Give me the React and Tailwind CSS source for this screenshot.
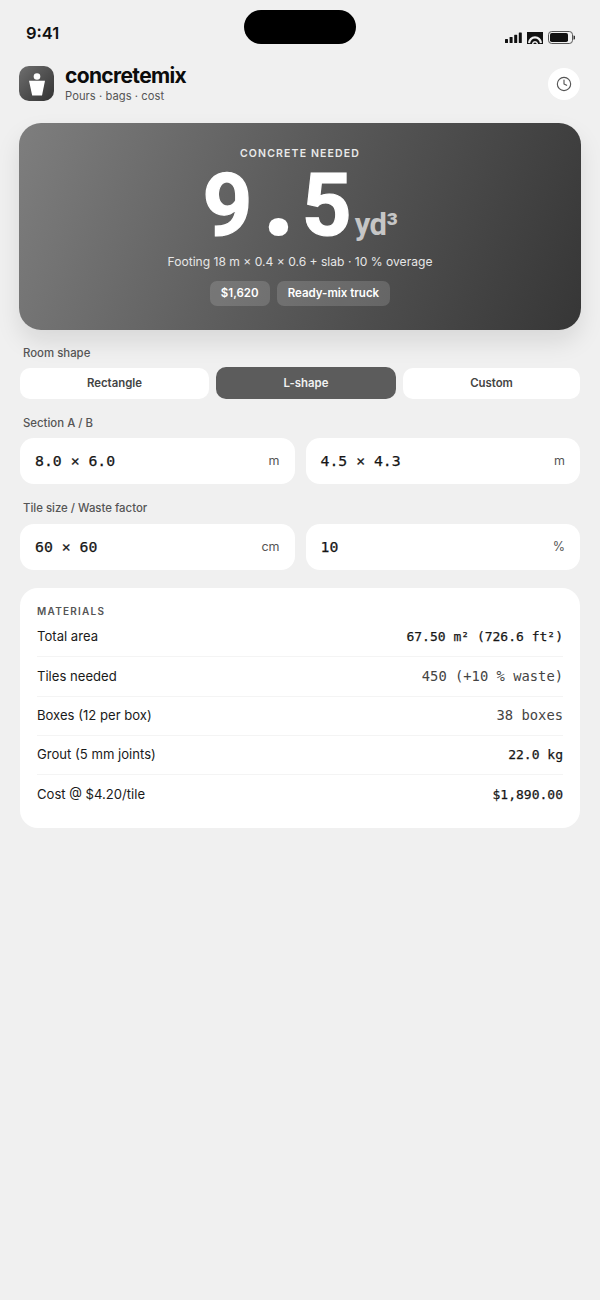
import React from "react";
import { Clock } from "lucide-react";

const inter = "font-['Inter',sans-serif]";
const mono = "font-['DejaVu_Sans_Mono',monospace]";

function Field({ value, unit }) {
  return (
    <div className="flex h-[46px] flex-1 items-center justify-between rounded-[14px] bg-white pl-[15px] pr-[15px]">
      <span className={`${mono} text-[14.8px] text-[#161616] [-webkit-text-stroke:0.25px_#161616]`}>{value}</span>
      <span className="text-[12.5px] text-[#555]">{unit}</span>
    </div>
  );
}

function Row({ label, value, last, bold }) {
  return (
    <div className={`flex h-[39.25px] items-center justify-between ${last ? "" : "border-b border-[#f4f4f4]"}`}>
      <span className="text-[13.1px] text-[#1a1a1a]">{label}</span>
      <span className={bold
        ? `${mono} text-[13px] text-[#161616] [-webkit-text-stroke:0.25px_#161616]`
        : `${mono} text-[13.8px] text-[#444]`}>{value}</span>
    </div>
  );
}

export default function App() {
  return (
    <div className={`${inter} h-[1300px] w-[600px] overflow-hidden bg-[#f0f0f0]`}>
      <div className="relative flex h-[54px] items-start justify-between pl-[26px] pr-[25px]">
        <span className="mt-[23px] text-[16.5px] font-semibold leading-[20px] text-[#111]">9:41</span>
        <div className="absolute left-[244px] top-[10px] h-[34px] w-[112px] rounded-full bg-black" />
        <div className="mt-[31px] flex items-center gap-[5px]">
          <svg width="17" height="11" viewBox="0 0 17 11" fill="#111">
            <rect x="0" y="7" width="3" height="4" rx="0.6" />
            <rect x="4.6" y="5" width="3" height="6" rx="0.6" />
            <rect x="9.2" y="2.8" width="3" height="8.2" rx="0.6" />
            <rect x="13.8" y="0.5" width="3" height="10.5" rx="0.6" />
          </svg>
          <svg width="16" height="12" viewBox="0 0 16 12">
            <rect width="16" height="12" fill="#111" />
            <path d="M2 11 C3.5 3.5 12.5 3.5 14 11" fill="none" stroke="#f0f0f0" strokeWidth="2.2" />
            <path d="M5.5 12 C6.2 9 9.8 9 10.5 12" fill="none" stroke="#f0f0f0" strokeWidth="1.4" />
          </svg>
          <svg width="27" height="13" viewBox="0 0 27 13">
            <rect x="0.5" y="0.5" width="24" height="12" rx="3.2" fill="none" stroke="#555" />
            <rect x="2" y="2" width="18" height="9" rx="1.8" fill="#111" />
            <path d="M25.5 4.5 a2 2 0 0 1 0 4 z" fill="#333" />
          </svg>
        </div>
      </div>

      <div className="mt-[12px] flex h-[35px] items-center justify-between pl-[19px] pr-[20px]">
        <div className="flex items-center gap-[11px]">
          <div className="flex h-[35px] w-[35px] items-center justify-center rounded-[10px] bg-gradient-to-br from-[#6f6f6f] to-[#333]">
            <svg width="18" height="24" viewBox="0 0 18 24" fill="#fff">
              <circle cx="9" cy="4.5" r="3.3" />
              <path d="M1 8.8 H17 L14 23.5 H4.2 Z" />
            </svg>
          </div>
          <div>
            <div className="text-[21px] font-bold leading-[24px] tracking-[-0.65px] text-[#0c0c0c]">concretemix</div>
            <div className="mt-[1px] text-[11.2px] leading-[15px] tracking-[0.05px] text-[#555]">Pours · bags · cost</div>
          </div>
        </div>
        <div className="flex h-[32px] w-[32px] items-center justify-center rounded-full bg-white">
          <Clock size={16} strokeWidth={1.7} color="#555" />
        </div>
      </div>

      <div className="mx-[19px] mt-[22px] flex h-[207px] flex-col items-center rounded-[22px] bg-[linear-gradient(112deg,#7e7e7e_0%,#5c5c5c_45%,#363636_100%)] pt-[24px] shadow-[0_12px_24px_rgba(0,0,0,0.1)]">
        <div className="text-[10.5px] font-semibold leading-[13px] tracking-[1.15px] text-[#e9e9e9]">CONCRETE NEEDED</div>
        <div className="mt-[3px] flex h-[79px] items-baseline text-white">
          <span className="font-['Roboto',sans-serif] text-[87px] font-bold leading-[85px] [-webkit-text-stroke:1.2px_#fff]">
            <span>9</span>
            <span className="ml-[9px] text-[122px] leading-[0] [-webkit-text-stroke:0]">.</span>
            <span className="ml-[5px]">5</span>
          </span>
          <span className="ml-[3px] font-['Roboto',sans-serif] text-[31px] font-bold leading-none tracking-[-0.5px] text-[#c6c6c6]">yd³</span>
        </div>
        <div className="mt-[12px] text-[12.1px] leading-[16px] text-[#e6e6e6]">Footing 18 m × 0.4 × 0.6 + slab · 10 % overage</div>
        <div className="mt-[11px] flex gap-[7px]">
          <div className="flex h-[25px] items-center rounded-[7px] bg-white/15 px-[11px] text-[11.5px] font-semibold text-white">$1,620</div>
          <div className="flex h-[25px] items-center rounded-[7px] bg-white/15 px-[11px] text-[11.5px] font-semibold text-white">Ready-mix truck</div>
        </div>
      </div>

      <div className="mx-[20px]">
        <div className="mt-[16px] px-[3px] text-[11.4px] font-medium leading-[14px] text-[#555]">Room shape</div>
        <div className="mt-[7px] flex items-center gap-[7px]">
          <div className="flex h-[31px] w-[189px] items-center justify-center rounded-[10px] bg-white pt-[1px] text-[11.4px] font-semibold text-[#444]">Rectangle</div>
          <div className="flex h-[32px] w-[180px] items-center justify-center rounded-[10px] bg-[#5c5c5c] pt-[1px] text-[11.4px] font-semibold text-[#f2f2f2]">L-shape</div>
          <div className="flex h-[31px] flex-1 items-center justify-center rounded-[10px] bg-white pt-[1px] text-[11.4px] font-semibold text-[#444]">Custom</div>
        </div>

        <div className="mt-[17px] px-[3px] text-[11.4px] font-medium leading-[14px] text-[#555]">Section A / B</div>
        <div className="mt-[8px] flex gap-[11px]">
          <Field value="8.0 × 6.0" unit="m" />
          <Field value="4.5 × 4.3" unit="m" />
        </div>

        <div className="mt-[17px] px-[3px] text-[11.4px] font-medium leading-[14px] text-[#555]">Tile size / Waste factor</div>
        <div className="mt-[9px] flex gap-[11px]">
          <Field value="60 × 60" unit="cm" />
          <Field value="10" unit="%" />
        </div>

        <div className="mt-[18px] h-[240px] rounded-[18px] bg-white px-[17px] pt-[17px]">
          <div className="text-[10px] font-semibold leading-[13px] tracking-[1.25px] text-[#555]">MATERIALS</div>
          <div className="mt-[0px]">
            <Row label="Total area" value="67.50 m² (726.6 ft²)" bold />
            <Row label="Tiles needed" value="450 (+10 % waste)" />
            <Row label="Boxes (12 per box)" value="38 boxes" />
            <Row label="Grout (5 mm joints)" value="22.0 kg" bold />
            <Row label="Cost @ $4.20/tile" value="$1,890.00" bold last />
          </div>
        </div>
      </div>
    </div>
  );
}
